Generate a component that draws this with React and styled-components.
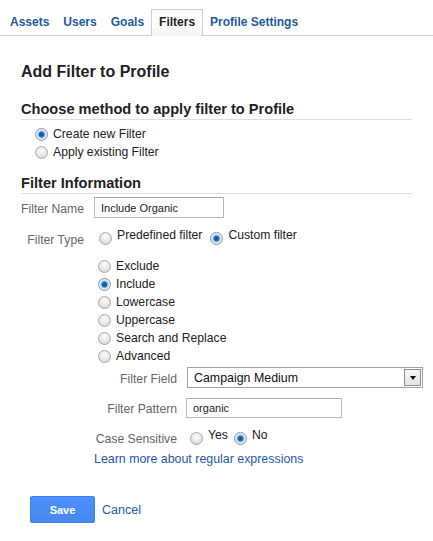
import styled, { createGlobalStyle } from "styled-components"

const GlobalStyle = createGlobalStyle`
    body {
        margin: 0;
        background: #fff;
        font-family: "Liberation Sans", Arial, sans-serif;
        color: #222;
    }
`

const TabBar = styled.div`
    display: flex;
    align-items: flex-end;
    height: 36px;
    box-sizing: border-box;
    padding-left: 3px;
    border-bottom: 1px solid #cfcfcf;
`

const Tab = styled.div`
    box-sizing: border-box;
    padding: 0 7px;
    font-size: 12px;
    font-weight: bold;
    cursor: pointer;
    color: ${props => props.active ? "#222" : "#1d5a9e"};
    height: ${props => props.active ? "27px" : "26px"};
    line-height: ${props => props.active ? "25px" : "27px"};
    margin-bottom: ${props => props.active ? "-1px" : "0"};
    border: ${props => props.active ? "1px solid #cfcfcf" : "0"};
    border-bottom: 0;
    background: ${props => props.active ? "linear-gradient(#fff 45%, #f3f3f3)" : "transparent"};
`

const Content = styled.div`
    padding: 0 21px;
`

const Title = styled.h1`
    margin: 26px 0 0;
    font-size: 16px;
    line-height: 20px;
    font-weight: bold;
    color: #222;
`

const SectionHeading = styled.h2`
    margin: ${props => props.top}px 0 0;
    padding-bottom: 1px;
    font-size: 14.6px;
    line-height: 18px;
    font-weight: bold;
    color: #222;
    border-bottom: 1px solid #dedede;
`

const RadioList = styled.div`
    display: flex;
    flex-direction: column;
    margin-top: ${props => props.top}px;
    padding-left: ${props => props.indent}px;
`

const RadioRow = styled.label`
    display: flex;
    align-items: center;
    gap: 5px;
    height: 18px;
    font-size: 12.2px;
    color: #222;
`

const InlineOptions = styled.div`
    display: flex;
    align-items: center;
    padding-left: 5px;
    gap: 8px;
`

const InlineOption = styled.label`
    display: flex;
    align-items: center;
    gap: 5px;
    font-size: 12.2px;
    color: #222;
`

const RaisedText = styled.span`
    padding-bottom: 7px;
`

const Radio = styled.input.attrs({ type: "radio" })`
    appearance: none;
    margin: 0;
    flex: none;
    width: 13px;
    height: 13px;
    box-sizing: border-box;
    border-radius: 50%;
    border: 1px solid #a9a9a9;
    background: radial-gradient(circle at 50% 35%, #fdfdfd 0%, #e6e6e6 55%, #cdcdcd 100%);

    &:checked {
        border-color: #8397ab;
        background: radial-gradient(circle, #0b4f8e 0, #1d73bd 2.4px, #9dc3e6 3.4px, #e9f0f7 4.6px, #d6dde4 100%);
    }
`

const Grid = styled.div`
    display: grid;
    grid-template-columns: ${props => props.label}px auto;
    grid-auto-rows: auto;
    column-gap: 10px;
    row-gap: ${props => props.gap}px;
    align-items: center;
    justify-items: start;
    margin-top: ${props => props.top}px;
`

const Label = styled.div`
    justify-self: end;
    padding-top: ${props => props.drop || 2}px;
    font-size: 12.2px;
    color: #666;
    white-space: nowrap;
`

const TextInput = styled.input`
    box-sizing: border-box;
    width: ${props => props.w}px;
    height: ${props => props.h}px;
    margin: 0 0 0 ${props => props.shift || 0}px;
    padding: 0 6px;
    border: 1px solid #b9b9b9;
    border-top-color: #a8a8a8;
    font-family: inherit;
    font-size: 11px;
    color: #222;
    outline: none;
`

const Select = styled.div`
    box-sizing: border-box;
    display: flex;
    align-items: center;
    width: 236px;
    height: 21px;
    padding: 1px;
    border: 1px solid #a3a3a3;
    background: #fff;
`

const SelectText = styled.span`
    flex: 1;
    padding-left: 5px;
    font-size: 12.4px;
    color: #111;
`

const SelectButton = styled.span`
    box-sizing: border-box;
    display: flex;
    align-items: center;
    justify-content: center;
    width: 17px;
    height: 100%;
    border: 1px solid #8e8e8e;
    background: linear-gradient(#f7f7f7, #e3e3e3);
`

const Caret = styled.span`
    width: 0;
    height: 0;
    border-left: 3.5px solid transparent;
    border-right: 3.5px solid transparent;
    border-top: 4px solid #111;
`

const Indent = styled.div`
    margin-left: 73px;
`

const Link = styled.a`
    display: block;
    margin-top: ${props => props.top || 0}px;
    font-size: 12.4px;
    line-height: 16px;
    color: #1e5aa5;
    text-decoration: none;
    cursor: pointer;
`

const Actions = styled.div`
    display: flex;
    align-items: center;
    gap: 7px;
    margin: 29px 0 0 9px;
`

const SaveButton = styled.button`
    box-sizing: border-box;
    width: 65px;
    height: 27px;
    border: 1px solid #3b82f0;
    border-radius: 2px;
    background: linear-gradient(#4d90fe, #4787ed);
    color: #fff;
    font-family: inherit;
    font-size: 11px;
    font-weight: bold;
    cursor: pointer;
`

const CancelLink = styled.a`
    font-size: 12.5px;
    color: #1e5aa5;
    cursor: pointer;
`

const tabs = ["Assets", "Users", "Goals", "Filters", "Profile Settings"]
const filterKinds = ["Exclude", "Include", "Lowercase", "Uppercase", "Search and Replace", "Advanced"]

export default function App() {
    return (
        <>
            <GlobalStyle />
            <TabBar>
                {tabs.map(tab => (
                    <Tab key={tab} active={tab === "Filters"}>{tab}</Tab>
                ))}
            </TabBar>
            <Content>
                <Title>Add Filter to Profile</Title>

                <SectionHeading top={18}>Choose method to apply filter to Profile</SectionHeading>
                <RadioList top={5} indent={14}>
                    <RadioRow><Radio name="method" defaultChecked />Create new Filter</RadioRow>
                    <RadioRow><Radio name="method" />Apply existing Filter</RadioRow>
                </RadioList>

                <SectionHeading top={13}>Filter Information</SectionHeading>
                <Grid label={63} gap={9} top={3}>
                    <Label drop={3}>Filter Name</Label>
                    <TextInput w={130} h={21} defaultValue="Include Organic" />
                    <Label drop={3}>Filter Type</Label>
                    <InlineOptions style={{ height: 22 }}>
                        <InlineOption><Radio name="type" /><RaisedText>Predefined filter</RaisedText></InlineOption>
                        <InlineOption><Radio name="type" defaultChecked /><RaisedText>Custom filter</RaisedText></InlineOption>
                    </InlineOptions>
                </Grid>

                <Indent>
                    <RadioList top={8} indent={4}>
                        {filterKinds.map(kind => (
                            <RadioRow key={kind}>
                                <Radio name="kind" defaultChecked={kind === "Include"} />{kind}
                            </RadioRow>
                        ))}
                    </RadioList>

                    <Grid label={83} gap={10} top={2}>
                        <Label drop={3}>Filter Field</Label>
                        <Select>
                            <SelectText>Campaign Medium</SelectText>
                            <SelectButton><Caret /></SelectButton>
                        </Select>
                        <Label>Filter Pattern</Label>
                        <TextInput w={156} h={20} shift={-1} defaultValue="organic" />
                        <Label>Case Sensitive</Label>
                        <InlineOptions style={{ height: 20, gap: 6, paddingLeft: 3 }}>
                            <InlineOption><Radio name="case" /><RaisedText>Yes</RaisedText></InlineOption>
                            <InlineOption><Radio name="case" defaultChecked /><RaisedText>No</RaisedText></InlineOption>
                        </InlineOptions>
                    </Grid>

                    <Link top={3}>Learn more about regular expressions</Link>
                </Indent>

                <Actions>
                    <SaveButton>Save</SaveButton>
                    <CancelLink>Cancel</CancelLink>
                </Actions>
            </Content>
        </>
    )
}
